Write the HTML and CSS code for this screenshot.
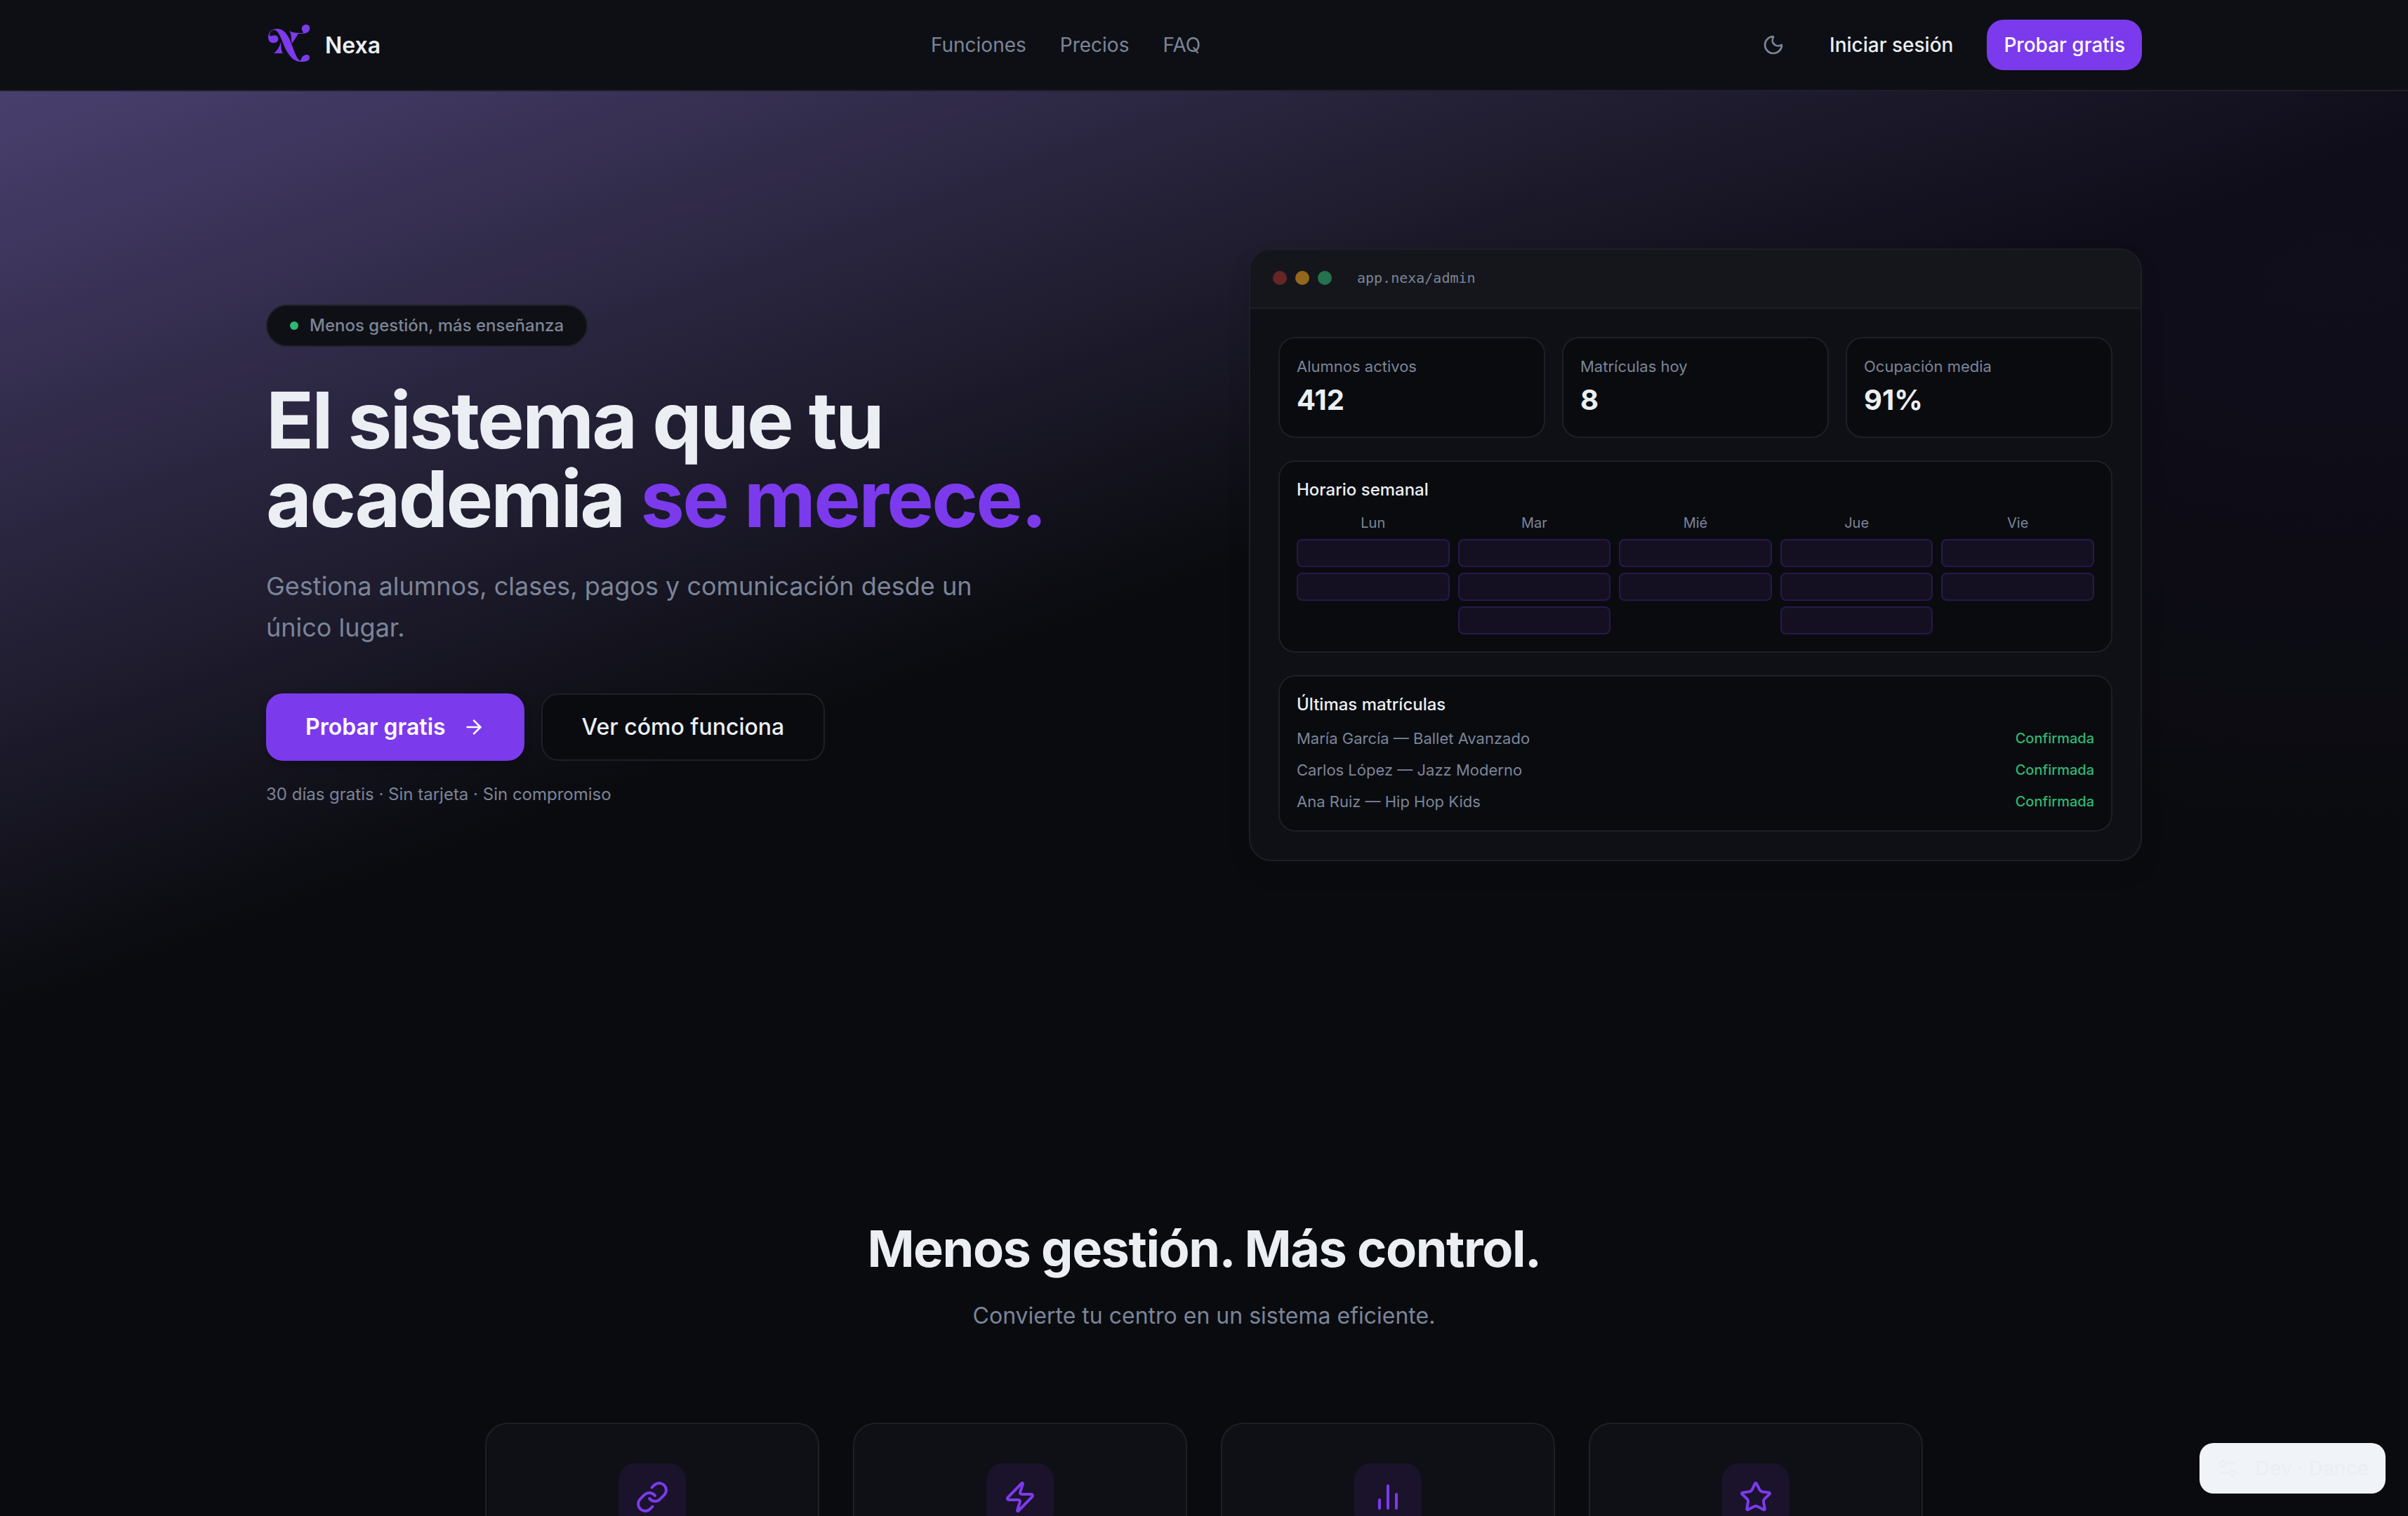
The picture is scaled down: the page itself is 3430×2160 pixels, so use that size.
FILE: index.html
```html
<!DOCTYPE html>
<html lang="es">
<head>
  <meta charset="UTF-8">
  <meta name="viewport" content="width=device-width, initial-scale=1.0">
  <title>Nexa</title>
  <link rel="stylesheet" href="styles.css">
</head>
<body>
  <header class="site-header">
    <div class="container header-inner">
      <a class="brand" href="#">
        <svg class="brand-logo" viewBox="0 0 64 64" aria-hidden="true">
          <path d="M3 21C3 13 9 9 16 9C24 9 29 15 33 23C39 36 43 53 49 54.500C51 48 54 46 58 46C61 46 62 48 62 50C62 54 58 56 50 56C40 56 34 49 29 40C24 31 20 14 13 11C8 10 5 14 5 19C9 20 11 17 15 19C19 22 18 28 12 29C6 30 3 26 3 21Z"/>
          <path d="M33 12C39 15 46 15 52 15C54 14 52 13 51 11C50 5 54 3 57 3C61 3 63 6 62 10C61 15 56 16 46 16L37 30C35 24 37 17 33 12Z"/>
          <path d="M21 28C22 35 21 40 24 44H11C16 40 19 35 21 28Z"/>
        </svg>
        <span>Nexa</span>
      </a>
      <nav class="main-nav">
        <a href="#funciones">Funciones</a>
        <a href="#precios">Precios</a>
        <a href="#faq">FAQ</a>
      </nav>
      <div class="header-actions">
        <button class="theme-toggle" type="button" aria-label="Cambiar tema">
          <svg class="icon" viewBox="0 0 24 24"><path d="M20.985 12.486a9 9 0 1 1-9.473-9.472c.405-.022.617.46.402.803a6 6 0 0 0 8.268 8.268c.344-.215.825-.004.803.401"/></svg>
        </button>
        <a class="btn btn-ghost" href="#login">Iniciar sesión</a>
        <a class="btn btn-primary" href="#registro">Probar gratis</a>
      </div>
    </div>
  </header>

  <main>
    <section class="hero">
      <div class="container hero-grid">
        <div class="hero-text">
          <p class="badge"><span class="badge-dot"></span>Menos gestión, más enseñanza</p>
          <h1>El sistema que tu academia <span class="accent">se merece.</span></h1>
          <p class="lead">Gestiona alumnos, clases, pagos y comunicación desde un único lugar.</p>
          <div class="cta-row">
            <a class="btn btn-large btn-cta" href="#registro">
              Probar gratis
              <svg class="icon" viewBox="0 0 24 24" aria-hidden="true"><path d="M5 12h14"/><path d="m12 5 7 7-7 7"/></svg>
            </a>
            <a class="btn btn-large btn-outline" href="#funciones">Ver cómo funciona</a>
          </div>
          <p class="note">30 días gratis · Sin tarjeta · Sin compromiso</p>
        </div>

        <div class="window">
          <div class="window-bar">
            <span class="dot dot-red"></span>
            <span class="dot dot-yellow"></span>
            <span class="dot dot-green"></span>
            <span class="window-url">app.nexa/admin</span>
          </div>
          <div class="window-body">
            <div class="stats">
              <div class="panel">
                <p class="stat-label">Alumnos activos</p>
                <p class="stat-value">412</p>
              </div>
              <div class="panel">
                <p class="stat-label">Matrículas hoy</p>
                <p class="stat-value">8</p>
              </div>
              <div class="panel">
                <p class="stat-label">Ocupación media</p>
                <p class="stat-value">91%</p>
              </div>
            </div>

            <div class="panel">
              <h3>Horario semanal</h3>
              <div class="week">
                <div class="day"><span>Lun</span><i></i><i></i></div>
                <div class="day"><span>Mar</span><i></i><i></i><i></i></div>
                <div class="day"><span>Mié</span><i></i><i></i></div>
                <div class="day"><span>Jue</span><i></i><i></i><i></i></div>
                <div class="day"><span>Vie</span><i></i><i></i></div>
              </div>
            </div>

            <div class="panel">
              <h3>Últimas matrículas</h3>
              <ul class="enrollments">
                <li>María García — Ballet Avanzado <span class="status">Confirmada</span></li>
                <li>Carlos López — Jazz Moderno <span class="status">Confirmada</span></li>
                <li>Ana Ruiz — Hip Hop Kids <span class="status">Confirmada</span></li>
              </ul>
            </div>
          </div>
        </div>
      </div>
    </section>

    <section class="features" id="funciones">
      <h2>Menos gestión. Más control.</h2>
      <p class="features-sub">Convierte tu centro en un sistema eficiente.</p>
      <div class="feature-grid">
        <article class="feature">
          <div class="feature-icon">
            <svg class="icon" viewBox="0 0 24 24"><path d="M10 13a5 5 0 0 0 7.54.54l3-3a5 5 0 0 0-7.07-7.07l-1.72 1.71"/><path d="M14 11a5 5 0 0 0-7.54-.54l-3 3a5 5 0 0 0 7.07 7.07l1.71-1.71"/></svg>
          </div>
        </article>
        <article class="feature">
          <div class="feature-icon">
            <svg class="icon" viewBox="0 0 24 24"><path d="M4 14a1 1 0 0 1-.78-1.63l9.9-10.2a.5.5 0 0 1 .86.46l-1.92 6.02A1 1 0 0 0 13 10h7a1 1 0 0 1 .78 1.63l-9.9 10.2a.5.5 0 0 1-.86-.46l1.92-6.02A1 1 0 0 0 11 14z"/></svg>
          </div>
        </article>
        <article class="feature">
          <div class="feature-icon">
            <svg class="icon" viewBox="0 0 24 24"><path d="M6 20v-6"/><path d="M12 20V4"/><path d="M18 20V10"/></svg>
          </div>
        </article>
        <article class="feature">
          <div class="feature-icon">
            <svg class="icon" viewBox="0 0 24 24"><path d="M11.525 2.295a.53.53 0 0 1 .95 0l2.31 4.679a2.123 2.123 0 0 0 1.595 1.16l5.166.756a.53.53 0 0 1 .294.904l-3.736 3.638a2.123 2.123 0 0 0-.611 1.878l.882 5.14a.53.53 0 0 1-.771.56l-4.618-2.428a2.122 2.122 0 0 0-1.973 0L6.396 21.01a.53.53 0 0 1-.77-.56l.881-5.139a2.122 2.122 0 0 0-.611-1.879L2.16 9.795a.53.53 0 0 1 .294-.906l5.165-.755a2.122 2.122 0 0 0 1.597-1.16z"/></svg>
          </div>
        </article>
      </div>
    </section>
  </main>

  <button class="dev-switch" type="button">
    <svg class="icon" viewBox="0 0 24 24" aria-hidden="true"><path d="M14 17H5"/><path d="M19 7h-9"/><circle cx="17" cy="17" r="3"/><circle cx="7" cy="7" r="3"/></svg>
    Dev · Dance
  </button>
</body>
</html>
```

FILE: styles.css
```css
:root {
  --bg: #0a0b0f;
  --surface: #0f1015;
  --border: #1e1f27;
  --text: #ebeff4;
  --muted: #7b8599;
  --primary: #7c3aed;
  --green: #2eb872;
}
* {
  box-sizing: border-box;
  margin: 0;
  padding: 0;
}
html {
  scrollbar-width: none;
}
body {
  background: var(--bg);
  color: var(--text);
  font-family: Inter, "Liberation Sans", sans-serif;
  font-size: 32px;
}
a {
  color: inherit;
  text-decoration: none;
}
button {
  border: none;
  background: none;
  font-family: inherit;
  cursor: pointer;
}
ul {
  list-style: none;
}
.container {
  max-width: 2800px;
  margin: 0 auto;
  padding: 0 64px;
}
.icon {
  width: 32px;
  height: 32px;
  flex-shrink: 0;
  fill: none;
  stroke: currentColor;
  stroke-width: 2;
  stroke-linecap: round;
  stroke-linejoin: round;
}

/* header */
.site-header {
  background: #0e0f14;
  border-bottom: 2px solid var(--border);
}
.header-inner {
  display: flex;
  align-items: center;
  justify-content: space-between;
  height: 128px;
}
.brand {
  display: flex;
  align-items: center;
  gap: 20px;
  font-weight: 600;
}
.brand-logo {
  width: 64px;
  height: 64px;
  fill: var(--primary);
}
.main-nav {
  display: flex;
  gap: 48px;
  font-size: 28px;
  color: var(--muted);
}
.header-actions {
  display: flex;
  align-items: center;
  gap: 24px;
}
.theme-toggle {
  display: flex;
  align-items: center;
  justify-content: center;
  width: 64px;
  height: 64px;
  color: var(--muted);
}

/* buttons */
.btn {
  display: flex;
  align-items: center;
  height: 72px;
  padding: 0 24px;
  border-radius: 24px;
  font-size: 28px;
  font-weight: 500;
}
.btn-primary,
.btn-cta {
  background: var(--primary);
  color: #fff;
}
.btn-large {
  gap: 24px;
  height: 96px;
  padding: 0 56px;
  font-size: 32px;
}
.btn-cta {
  font-weight: 600;
  box-shadow: 0 4px 12px rgba(0, 0, 0, 0.2);
}
.btn-outline {
  background: var(--bg);
  border: 2px solid var(--border);
}

/* hero */
.hero {
  padding: 224px 0;
  background:
    radial-gradient(ellipse 35% 60% at 97% 20%, rgba(124, 58, 237, 0.06), transparent),
    linear-gradient(160deg, #493f6e 0%, var(--bg) 51%);
}
.hero-grid {
  display: grid;
  grid-template-columns: 1fr 1fr;
  gap: 128px;
  align-items: center;
}
.badge {
  display: inline-flex;
  align-items: center;
  gap: 16px;
  padding: 12px 32px;
  background: var(--surface);
  border: 2px solid var(--border);
  border-radius: 30px;
  color: var(--muted);
  font-size: 24px;
  font-weight: 500;
  line-height: 32px;
}
.badge-dot {
  width: 12px;
  height: 12px;
  border-radius: 50%;
  background: var(--green);
}
.hero-text {
  display: flex;
  flex-direction: column;
  align-items: flex-start;
}
h1 {
  margin: 48px 0 40px;
  font-size: 112px;
  font-weight: 700;
  line-height: 112px;
  letter-spacing: -0.025em;
}
.accent {
  color: var(--primary);
}
.lead {
  max-width: 1024px;
  color: var(--muted);
  font-size: 36px;
  line-height: 59px;
}
.cta-row {
  display: flex;
  gap: 24px;
  margin: 64px 0 32px;
}
.note {
  color: var(--muted);
  font-size: 24px;
  line-height: 32px;
}

/* app preview window */
.window {
  overflow: hidden;
  background: var(--surface);
  border: 2px solid var(--border);
  border-radius: 32px;
  box-shadow: 0 16px 32px rgba(0, 0, 0, 0.1);
}
.window-bar {
  display: flex;
  align-items: center;
  gap: 12px;
  padding: 24px 32px 26px;
  background: #15161b;
  border-bottom: 2px solid var(--border);
}
.dot {
  width: 20px;
  height: 20px;
  border-radius: 50%;
}
.dot-red {
  background: #662527;
}
.dot-yellow {
  background: #94671b;
}
.dot-green {
  background: #24734e;
}
.window-url {
  margin-left: 24px;
  color: var(--muted);
  font-family: "DejaVu Sans Mono", monospace;
  font-size: 20px;
  line-height: 32px;
}
.window-body {
  display: flex;
  flex-direction: column;
  gap: 32px;
  padding: 40px;
}
.panel {
  padding: 24px;
  background: var(--bg);
  border: 2px solid var(--border);
  border-radius: 24px;
}
.panel h3 {
  margin-bottom: 16px;
  font-size: 24px;
  font-weight: 500;
  line-height: 32px;
}
.stats {
  display: grid;
  grid-template-columns: repeat(3, 1fr);
  gap: 24px;
}
.stat-label {
  margin-bottom: 4px;
  color: var(--muted);
  font-size: 22px;
  line-height: 32px;
}
.stat-value {
  font-size: 40px;
  font-weight: 700;
  line-height: 56px;
}
.week {
  display: grid;
  grid-template-columns: repeat(5, 1fr);
  gap: 12px;
}
.day {
  display: flex;
  flex-direction: column;
  gap: 8px;
}
.day span {
  color: var(--muted);
  font-size: 20px;
  line-height: 30px;
  text-align: center;
}
.day i {
  height: 40px;
  background: #141021;
  border: 2px solid #28184d;
  border-radius: 8px;
}
.enrollments {
  display: flex;
  flex-direction: column;
  gap: 12px;
}
.enrollments li {
  display: flex;
  align-items: center;
  justify-content: space-between;
  color: var(--muted);
  font-size: 22px;
  line-height: 33px;
}
.status {
  color: var(--green);
  font-size: 20px;
  font-weight: 500;
}

/* features */
.features {
  padding: 288px 64px 0;
  text-align: center;
}
h2 {
  font-size: 72px;
  font-weight: 700;
  line-height: 80px;
  letter-spacing: -0.02em;
}
.features-sub {
  margin-top: 32px;
  color: var(--muted);
  font-size: 32px;
  line-height: 48px;
}
.feature-grid {
  display: grid;
  grid-template-columns: repeat(4, 1fr);
  gap: 48px;
  max-width: 2048px;
  margin: 128px auto 0;
}
.feature {
  display: flex;
  justify-content: center;
  min-height: 400px;
  padding: 56px;
  background: var(--surface);
  border: 2px solid var(--border);
  border-radius: 32px;
}
.feature-icon {
  display: flex;
  align-items: center;
  justify-content: center;
  width: 96px;
  height: 96px;
  border-radius: 24px;
  background: #1a132b;
  color: var(--primary);
}
.feature-icon .icon {
  width: 48px;
  height: 48px;
}

.dev-switch {
  position: fixed;
  right: 32px;
  bottom: 32px;
  display: flex;
  align-items: center;
  gap: 24px;
  height: 72px;
  padding: 0 24px;
  border-radius: 20px;
  background: #f0f3f8;
  color: #eaeff3;
  font-size: 28px;
  font-weight: 500;
}
```
